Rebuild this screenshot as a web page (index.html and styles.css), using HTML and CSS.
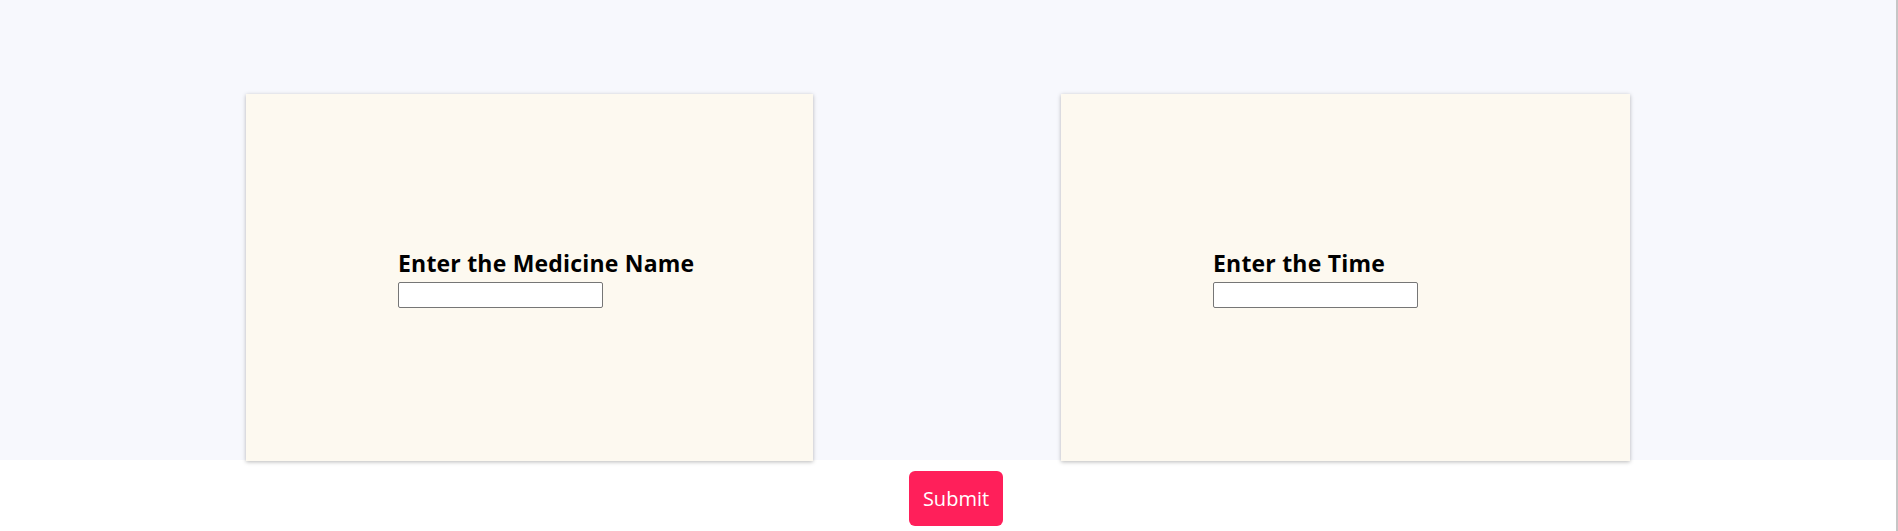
FILE: index.html
```html
<!DOCTYPE html>
<html>
<head>
<meta charset="utf-8">
<link rel="stylesheet" href="styles.css">
</head>
<body>
<section class="panel">
  <div class="card card-left">
    <div class="field">
      <label class="label">Enter the Medicine Name</label>
      <input class="input" type="text">
    </div>
  </div>
  <div class="card card-right">
    <div class="field">
      <label class="label">Enter the Time</label>
      <input class="input" type="text">
    </div>
  </div>
</section>
<div class="actions">
  <button class="submit">Submit</button>
</div>
</body>
</html>
```
FILE: styles.css
```css
html, body {
  margin: 0;
  padding: 0;
  background: #ffffff;
  font-family: "Open Sans", "Noto Sans", sans-serif;
}
body {
  border-right: 2px solid #c6c6c6;
  box-sizing: border-box;
  min-height: 531px;
}
.panel {
  background: #f7f8fd;
  height: 460px;
  box-sizing: border-box;
  padding: 94px 0 0 246px;
  display: flex;
  gap: 248px;
}
.card {
  background: #fdf9f0;
  height: 367px;
  box-shadow: 0 1px 4px rgba(0, 0, 0, 0.28);
  display: flex;
  align-items: center;
  box-sizing: border-box;
  padding-left: 152px;
}
.card-left { width: 567px; }
.card-right { width: 569px; }
.field {
  display: flex;
  flex-direction: column;
  align-items: flex-start;
}
.label {
  font-weight: 700;
  font-size: 23px;
  line-height: 30px;
  margin-bottom: 4px;
  color: #000;
  letter-spacing: 0.2px;
}
.input {
  width: 205px;
  height: 26px;
  box-sizing: border-box;
  margin: 0;
  border: 1px solid #767676;
  border-radius: 2px;
  background: #fff;
}
.actions {
  display: flex;
  justify-content: flex-start;
  padding: 11px 0 0 909px;
}
.submit {
  width: 94px;
  height: 55px;
  border: none;
  border-radius: 6px;
  background: #ff1f5a;
  color: #fff;
  font-family: "Open Sans", "Noto Sans", sans-serif;
  font-size: 20px;
  padding: 0;
}
```
